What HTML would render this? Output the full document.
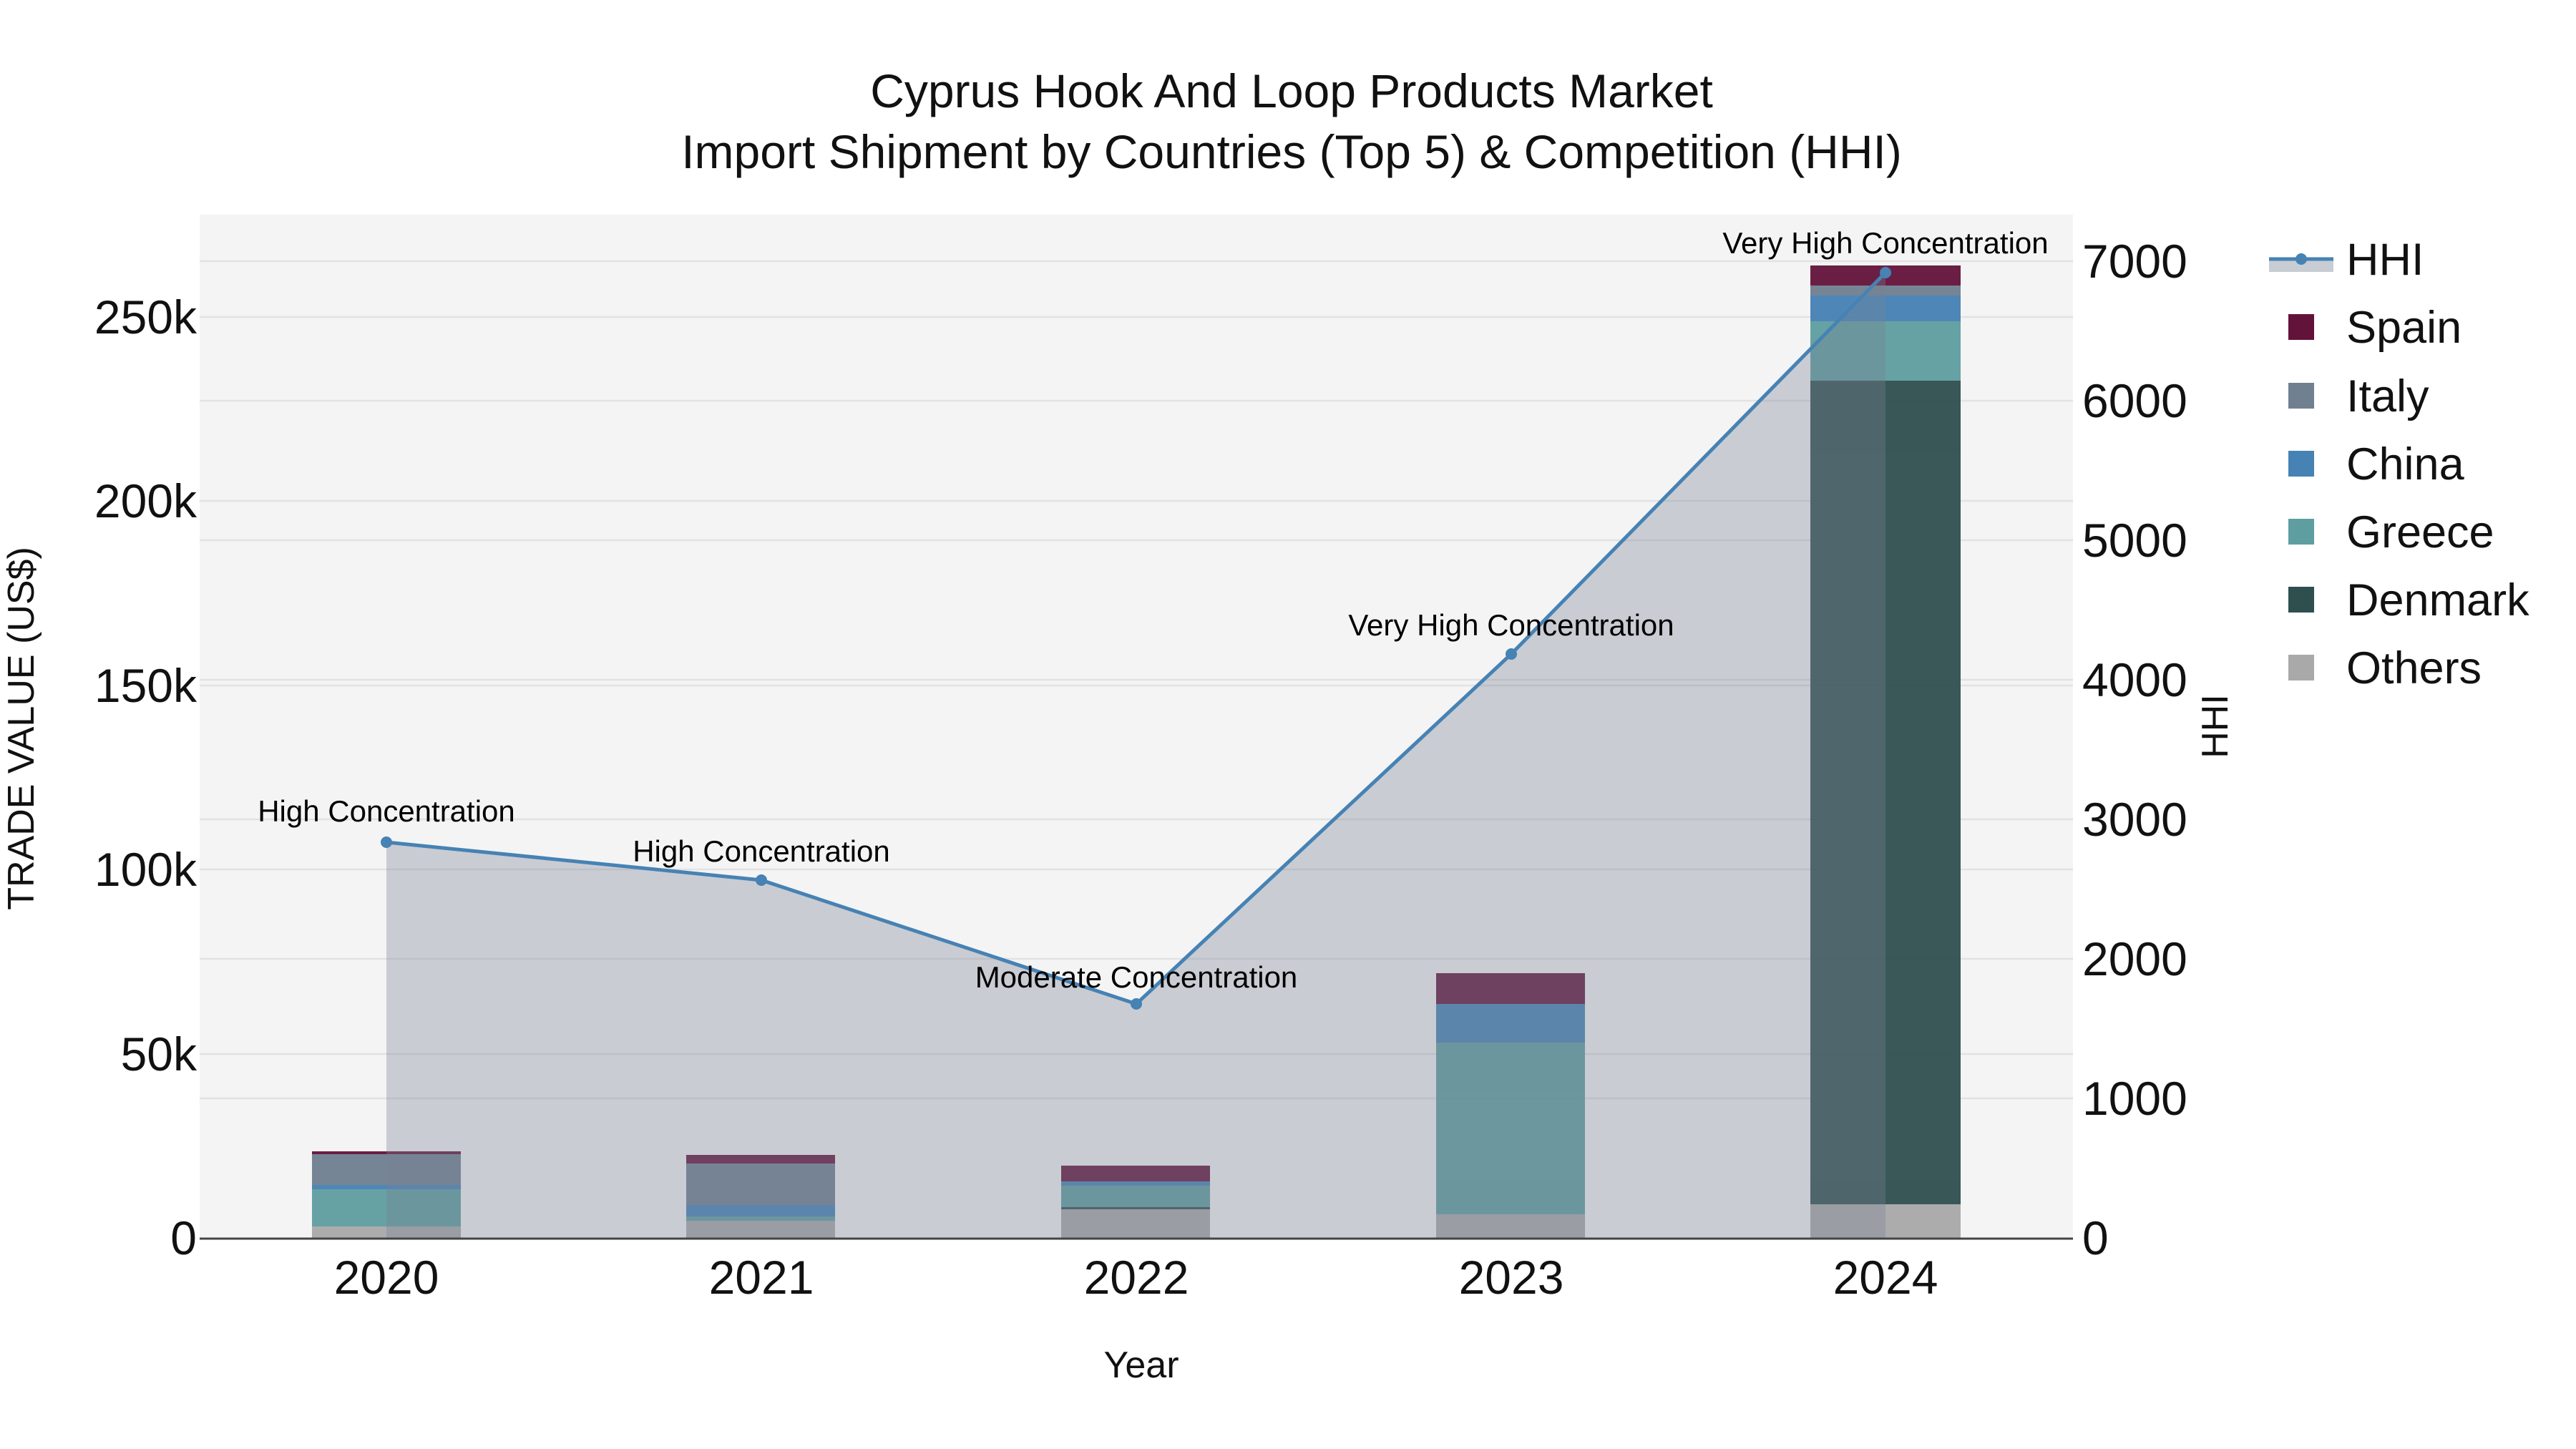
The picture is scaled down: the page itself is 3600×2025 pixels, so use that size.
<!DOCTYPE html>
<html><head><meta charset="utf-8"><style>
html,body{margin:0;padding:0;background:#fff;}
svg{display:block;font-family:"Liberation Sans",sans-serif;}
</style></head><body>
<svg width="3600" height="2025" viewBox="0 0 3600 2025" xmlns="http://www.w3.org/2000/svg">
<rect width="3600" height="2025" fill="#fff"/>
<rect x="279" y="300" width="2618" height="1430" fill="#f4f4f4"/>
<g stroke="#e2e2e2" stroke-width="2.5">
<line x1="279" x2="2897" y1="1473" y2="1473"/><line x1="279" x2="2897" y1="1215" y2="1215"/>
<line x1="279" x2="2897" y1="958" y2="958"/><line x1="279" x2="2897" y1="700" y2="700"/>
<line x1="279" x2="2897" y1="443" y2="443"/>
<line x1="279" x2="2897" y1="1535" y2="1535"/><line x1="279" x2="2897" y1="1340" y2="1340"/>
<line x1="279" x2="2897" y1="1145" y2="1145"/><line x1="279" x2="2897" y1="950" y2="950"/>
<line x1="279" x2="2897" y1="755" y2="755"/><line x1="279" x2="2897" y1="560" y2="560"/>
<line x1="279" x2="2897" y1="365" y2="365"/>
</g>
<g opacity="0.95">
<rect x="436" y="1714" width="208" height="16" fill="#a9a9a9"/>
<rect x="436" y="1662" width="208" height="52" fill="#5f9ea0"/>
<rect x="436" y="1656" width="208" height="6" fill="#4682b4"/>
<rect x="436" y="1613" width="208" height="43" fill="#708090"/>
<rect x="436" y="1609" width="208" height="4" fill="#63133a"/>
<rect x="959" y="1706" width="208" height="24" fill="#a9a9a9"/>
<rect x="959" y="1700" width="208" height="6" fill="#5f9ea0"/>
<rect x="959" y="1684" width="208" height="16" fill="#4682b4"/>
<rect x="959" y="1626" width="208" height="58" fill="#708090"/>
<rect x="959" y="1614" width="208" height="12" fill="#63133a"/>
<rect x="1483" y="1690" width="208" height="40" fill="#a9a9a9"/>
<rect x="1483" y="1687" width="208" height="3" fill="#2f4f4f"/>
<rect x="1483" y="1657" width="208" height="30" fill="#5f9ea0"/>
<rect x="1483" y="1651" width="208" height="6" fill="#4682b4"/>
<rect x="1483" y="1629" width="208" height="22" fill="#63133a"/>
<rect x="2007" y="1697" width="208" height="33" fill="#a9a9a9"/>
<rect x="2007" y="1457" width="208" height="240" fill="#5f9ea0"/>
<rect x="2007" y="1403" width="208" height="54" fill="#4682b4"/>
<rect x="2007" y="1360" width="208" height="43" fill="#63133a"/>
<rect x="2530" y="1683" width="210" height="47" fill="#a9a9a9"/>
<rect x="2530" y="532" width="210" height="1151" fill="#2f4f4f"/>
<rect x="2530" y="449" width="210" height="83" fill="#5f9ea0"/>
<rect x="2530" y="413" width="210" height="36" fill="#4682b4"/>
<rect x="2530" y="399" width="210" height="14" fill="#708090"/>
<rect x="2530" y="371" width="210" height="28" fill="#63133a"/>
</g>
<polygon points="540,1730 540,1177 1064,1230 1588,1403 2112,914 2635,381 2635,1730" fill="rgb(120,130,150)" fill-opacity="0.35"/>
<line x1="279" x2="2897" y1="1731" y2="1731" stroke="#444" stroke-width="3"/>
<polyline points="540,1177 1064,1230 1588,1403 2112,914 2635,381" fill="none" stroke="#4682b4" stroke-width="5"/>
<g fill="#4682b4"><circle cx="540" cy="1177" r="8"/><circle cx="1064" cy="1230" r="8"/><circle cx="1588" cy="1403" r="8"/><circle cx="2112" cy="914" r="8"/><circle cx="2635" cy="381" r="8"/></g>
<g font-size="42" text-anchor="middle" fill="#000">
<text x="540" y="1148">High Concentration</text>
<text x="1064" y="1204">High Concentration</text>
<text x="1588" y="1380">Moderate Concentration</text>
<text x="2112" y="888">Very High Concentration</text>
<text x="2635" y="354">Very High Concentration</text>
</g>
<g text-anchor="middle" fill="#111" font-size="66">
<text x="1805" y="150">Cyprus Hook And Loop Products Market</text>
<text x="1805" y="235">Import Shipment by Countries (Top 5) &amp; Competition (HHI)</text>
</g>
<g font-size="66" text-anchor="end" fill="#111">
<text x="275" y="1753">0</text><text x="275" y="1496">50k</text><text x="275" y="1238">100k</text>
<text x="275" y="981">150k</text><text x="275" y="723">200k</text><text x="275" y="466">250k</text>
</g>
<g font-size="66" text-anchor="start" fill="#111">
<text x="2910" y="1753">0</text><text x="2910" y="1558">1000</text><text x="2910" y="1363">2000</text>
<text x="2910" y="1168">3000</text><text x="2910" y="973">4000</text><text x="2910" y="778">5000</text>
<text x="2910" y="583">6000</text><text x="2910" y="388">7000</text>
</g>
<g font-size="66" text-anchor="middle" fill="#111">
<text x="540" y="1808">2020</text><text x="1064" y="1808">2021</text><text x="1588" y="1808">2022</text>
<text x="2112" y="1808">2023</text><text x="2635" y="1808">2024</text>
</g>
<text x="1595" y="1925" font-size="52" text-anchor="middle" fill="#111">Year</text>
<text transform="translate(47,1018) rotate(-90)" font-size="52" text-anchor="middle" fill="#111">TRADE VALUE (US$)</text>
<text transform="translate(3113,1015) rotate(-90)" font-size="52" text-anchor="middle" fill="#111">HHI</text>
<rect x="3171" y="362" width="90" height="18" fill="#c8ccd3"/>
<line x1="3171" x2="3261" y1="362" y2="362" stroke="#4682b4" stroke-width="5"/>
<circle cx="3216" cy="362" r="8" fill="#4682b4"/>
<g font-size="63" fill="#111">
<text x="3279" y="384">HHI</text>
<text x="3279" y="479">Spain</text>
<text x="3279" y="575">Italy</text>
<text x="3279" y="670">China</text>
<text x="3279" y="765">Greece</text>
<text x="3279" y="860">Denmark</text>
<text x="3279" y="955">Others</text>
</g>
<rect x="3198" y="439" width="36" height="36" fill="#63133a"/>
<rect x="3198" y="535" width="36" height="36" fill="#708090"/>
<rect x="3198" y="630" width="36" height="36" fill="#4682b4"/>
<rect x="3198" y="725" width="36" height="36" fill="#5f9ea0"/>
<rect x="3198" y="820" width="36" height="36" fill="#2f4f4f"/>
<rect x="3198" y="915" width="36" height="36" fill="#a9a9a9"/>
</svg>
</body></html>
